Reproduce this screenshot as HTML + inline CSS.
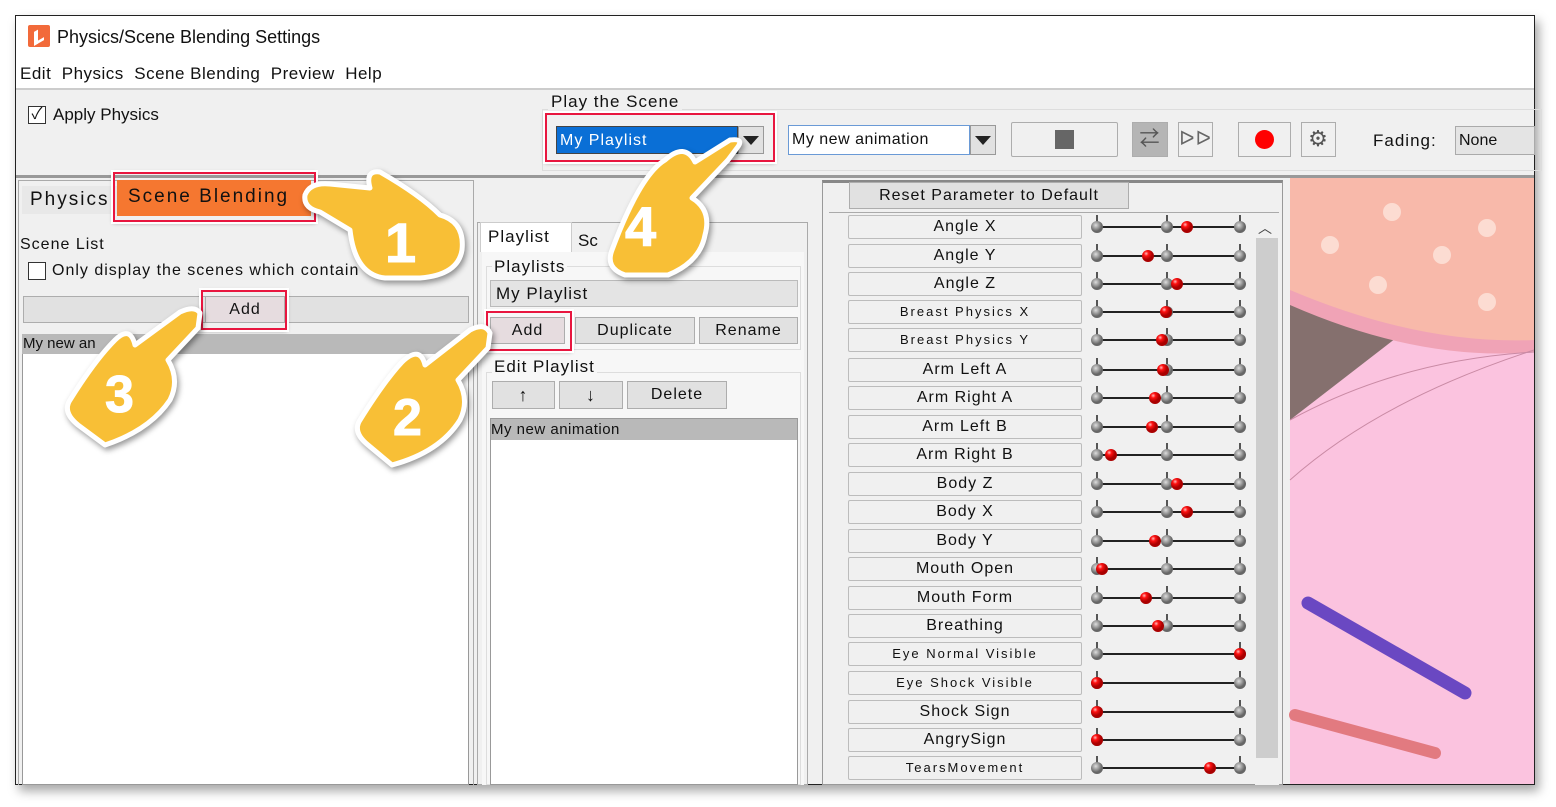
<!DOCTYPE html>
<html><head><meta charset="utf-8"><style>
*{box-sizing:border-box;margin:0;padding:0}
body{width:1556px;height:807px;background:#fff;position:relative;overflow:hidden;font-family:"Liberation Sans","Noto Sans CJK JP",sans-serif;font-size:16px;color:#111}
.a{position:absolute}
.win{left:15px;top:15px;width:1520px;height:770px;border:1px solid #222;background:#f0f0f0;box-shadow:4px 6px 10px rgba(0,0,0,.35)}
.btn{position:absolute;background:#e1e1e1;border:1px solid #adadad;text-align:center;letter-spacing:1px}
.red{position:absolute;border:2px solid #e8163f;box-shadow:0 0 0 2px #fff,0 1px 4px rgba(0,0,0,.4)}
.lbl{position:absolute;left:848px;width:234px;height:24px;background:#f0f0f0;border:1px solid #bcbcbc;border-radius:2px;text-align:center;font-size:16px;line-height:22px;letter-spacing:1px}
.sm{font-size:13px;letter-spacing:2px}
</style></head><body>
<div class="a win"></div>
<div class="a" style="left:16px;top:16px;width:1518px;height:44px;background:#fff"></div>
<div class="a" style="left:28px;top:25px;width:22px;height:22px;background:#f26a3a;border-radius:2px"></div>
<div class="a" style="left:34px;top:29px;width:10px;height:14px;border-left:4px solid #fff;border-bottom:3px solid #fff;transform:skewY(-30deg)"></div>
<div class="a" style="left:57px;top:27px;font-size:18px">Physics/Scene Blending Settings</div>
<div class="a" style="left:16px;top:60px;width:1518px;height:30px;background:#fff;border-bottom:2px solid #ccc"></div>
<div class="a" style="left:20px;top:64px;font-size:17px;letter-spacing:.5px">Edit&nbsp; Physics&nbsp; Scene Blending&nbsp; Preview&nbsp; Help</div>
<div class="a" style="left:28px;top:106px;width:18px;height:18px;border:1px solid #333;background:#fff;font-size:16px;line-height:15px;text-align:center">✓</div>
<div class="a" style="left:53px;top:105px;font-size:17px">Apply Physics</div>
<div class="a" style="left:542px;top:109px;width:1000px;height:62px;border:1px solid #ddd"></div>
<div class="a" style="left:548px;top:92px;background:#f0f0f0;padding:0 3px;font-size:17px;letter-spacing:1px">Play the Scene</div>
<div class="a" style="left:556px;top:126px;width:182px;height:28px;background:#0a6fd6;color:#fff;padding-left:3px;line-height:27px;font-size:16px;letter-spacing:1px;border:1px solid #444">My Playlist</div>
<div class="a" style="left:738px;top:126px;width:26px;height:28px;background:#e1e1e1;border:1px solid #999"></div>
<div class="a" style="left:743px;top:136px;border-left:8px solid transparent;border-right:8px solid transparent;border-top:9px solid #222"></div>
<div class="red" style="left:545px;top:113px;width:230px;height:49px"></div>
<div class="a" style="left:788px;top:125px;width:182px;height:30px;background:#fff;border:1px solid #6a9ad6;padding-left:3px;line-height:28px;letter-spacing:.5px">My new animation</div>
<div class="a" style="left:970px;top:125px;width:26px;height:30px;background:#e1e1e1;border:1px solid #999"></div>
<div class="a" style="left:975px;top:136px;border-left:8px solid transparent;border-right:8px solid transparent;border-top:9px solid #222"></div>
<div class="btn" style="left:1011px;top:122px;width:107px;height:35px;background:#f0f0f0;border-radius:2px"></div>
<div class="a" style="left:1055px;top:130px;width:19px;height:19px;background:#666"></div>
<div class="btn" style="left:1132px;top:122px;width:36px;height:35px;background:#b5b5b5;color:#555;font-size:20px;line-height:32px">⇄</div>
<div class="btn" style="left:1178px;top:122px;width:35px;height:35px;background:#f0f0f0;color:#666;font-size:20px;line-height:32px">ᐅᐅ</div>
<div class="btn" style="left:1238px;top:122px;width:53px;height:35px;background:#f0f0f0"></div>
<div class="a" style="left:1255px;top:130px;width:19px;height:19px;background:#f00;border-radius:50%"></div>
<div class="btn" style="left:1301px;top:122px;width:35px;height:35px;background:#f0f0f0;color:#555;font-size:22px;line-height:31px">⚙</div>
<div class="a" style="left:1373px;top:131px;font-size:17px;letter-spacing:1px">Fading:</div>
<div class="a" style="left:1455px;top:126px;width:80px;height:29px;background:#e4e4e4;border:1px solid #aaa;padding-left:3px;line-height:27px">None</div>
<div class="a" style="left:16px;top:175px;width:1518px;height:3px;background:#999"></div>
<div class="a" style="left:18px;top:180px;width:456px;height:605px;border:1px solid #aaa;border-bottom:none"></div>
<div class="a" style="left:22px;top:186px;width:95px;height:28px;background:#e8e8e8;font-size:19px;letter-spacing:2px;line-height:28px;padding-left:8px">Physics</div>
<div class="a" style="left:117px;top:180px;width:194px;height:36px;background:#f57730;font-size:19px;letter-spacing:2px;line-height:34px;padding-left:11px">Scene Blending</div>
<div class="red" style="left:113px;top:172px;width:203px;height:50px"></div>
<div class="a" style="left:20px;top:236px;font-size:16px;letter-spacing:1px">Scene List</div>
<div class="a" style="left:28px;top:262px;width:18px;height:18px;border:1px solid #333;background:#fff"></div>
<div class="a" style="left:52px;top:262px;font-size:16px;letter-spacing:1px">Only display the scenes which contain</div>
<div class="btn" style="left:23px;top:296px;width:446px;height:27px"></div>
<div class="btn" style="left:205px;top:296px;width:80px;height:27px;background:#e6dcdf;line-height:25px">Add</div>
<div class="red" style="left:201px;top:290px;width:86px;height:40px"></div>
<div class="a" style="left:22px;top:334px;width:447px;height:451px;background:#fff;border:1px solid #999"></div>
<div class="a" style="left:22px;top:334px;width:447px;height:20px;background:#b9b9b9;padding-left:1px;line-height:20px;font-size:15px">My new an</div>
<div class="a" style="left:477px;top:222px;width:331px;height:563px;border:1px solid #aaa"></div>
<div class="a" style="left:480px;top:222px;width:92px;height:30px;background:#fff;border:1px solid #ccc;border-bottom:none;font-size:17px;letter-spacing:1px;line-height:28px;padding-left:7px">Playlist</div>
<div class="a" style="left:578px;top:231px;font-size:17px">Sc</div>
<div class="a" style="left:482px;top:252px;width:322px;height:533px;background:#f7f7f7"></div>
<div class="a" style="left:486px;top:266px;width:315px;height:84px;border:1px solid #ddd"></div>
<div class="a" style="left:492px;top:257px;background:#f7f7f7;padding:0 2px;font-size:17px;letter-spacing:1px">Playlists</div>
<div class="a" style="left:490px;top:280px;width:308px;height:27px;background:#e4e4e4;border:1px solid #bbb;padding-left:5px;line-height:25px;font-size:17px;letter-spacing:1px">My Playlist</div>
<div class="btn" style="left:490px;top:317px;width:75px;height:27px;background:#e6dcdf;line-height:25px">Add</div>
<div class="btn" style="left:575px;top:317px;width:120px;height:27px;line-height:25px">Duplicate</div>
<div class="btn" style="left:699px;top:317px;width:99px;height:27px;line-height:25px">Rename</div>
<div class="red" style="left:486px;top:311px;width:86px;height:40px"></div>
<div class="a" style="left:486px;top:372px;width:315px;height:413px;border:1px solid #ddd"></div>
<div class="a" style="left:492px;top:357px;background:#f7f7f7;padding:0 2px;font-size:17px;letter-spacing:1px">Edit Playlist</div>
<div class="btn" style="left:492px;top:381px;width:63px;height:28px;line-height:26px;font-size:18px">↑</div>
<div class="btn" style="left:559px;top:381px;width:64px;height:28px;line-height:26px;font-size:18px">↓</div>
<div class="btn" style="left:627px;top:381px;width:100px;height:28px;line-height:26px">Delete</div>
<div class="a" style="left:490px;top:418px;width:308px;height:367px;background:#fff;border:1px solid #999"></div>
<div class="a" style="left:491px;top:419px;width:306px;height:21px;background:#b9b9b9;line-height:21px;font-size:15px;letter-spacing:.5px">My new animation</div>
<div class="a" style="left:822px;top:180px;width:461px;height:605px;border:1px solid #999;border-top:3px solid #888"></div>
<div class="btn" style="left:849px;top:182px;width:280px;height:27px;line-height:25px;font-size:16px">Reset Parameter to Default</div>
<div class="a" style="left:829px;top:212px;width:450px;height:1px;background:#aaa"></div>
<div class="a" style="left:1255px;top:215px;width:24px;height:570px;background:#f0f0f0"></div>
<div class="a" style="left:1258px;top:218px;font-size:14px;color:#444">︿</div>
<div class="a" style="left:1256px;top:238px;width:22px;height:520px;background:#cdcdcd"></div>
<div class="lbl" style="top:215px">Angle X</div>
<div class="lbl" style="top:244px">Angle Y</div>
<div class="lbl" style="top:272px">Angle Z</div>
<div class="lbl sm" style="top:300px">Breast Physics X</div>
<div class="lbl sm" style="top:328px">Breast Physics Y</div>
<div class="lbl" style="top:358px">Arm Left A</div>
<div class="lbl" style="top:386px">Arm Right A</div>
<div class="lbl" style="top:415px">Arm Left B</div>
<div class="lbl" style="top:443px">Arm Right B</div>
<div class="lbl" style="top:472px">Body Z</div>
<div class="lbl" style="top:500px">Body X</div>
<div class="lbl" style="top:529px">Body Y</div>
<div class="lbl" style="top:557px">Mouth Open</div>
<div class="lbl" style="top:586px">Mouth Form</div>
<div class="lbl" style="top:614px">Breathing</div>
<div class="lbl sm" style="top:642px">Eye Normal Visible</div>
<div class="lbl sm" style="top:671px">Eye Shock Visible</div>
<div class="lbl" style="top:700px">Shock Sign</div>
<div class="lbl" style="top:728px">AngrySign</div>
<div class="lbl sm" style="top:756px">TearsMovement</div>
<svg class="a" style="left:0;top:0" width="1556" height="807">
<defs><radialGradient id="g" cx=".4" cy=".35"><stop offset="0" stop-color="#ddd"/><stop offset="1" stop-color="#666"/></radialGradient>
<radialGradient id="r" cx=".35" cy=".3"><stop offset="0" stop-color="#fbb"/><stop offset=".4" stop-color="#f11"/><stop offset="1" stop-color="#a00"/></radialGradient>
<g id="s3"><line x1="1097" x2="1240" stroke="#222" stroke-width="2"/><line x1="1097" x2="1097" y1="-12" y2="0" stroke="#555" stroke-width="2"/><line x1="1167" x2="1167" y1="-12" y2="0" stroke="#555" stroke-width="2"/><line x1="1240" x2="1240" y1="-12" y2="0" stroke="#555" stroke-width="2"/><circle cx="1097" r="6" fill="url(#g)"/><circle cx="1167" r="6" fill="url(#g)"/><circle cx="1240" r="6" fill="url(#g)"/></g>
<g id="s2"><line x1="1097" x2="1240" stroke="#222" stroke-width="2"/><line x1="1097" x2="1097" y1="-12" y2="0" stroke="#555" stroke-width="2"/><line x1="1240" x2="1240" y1="-12" y2="0" stroke="#555" stroke-width="2"/><circle cx="1097" r="6" fill="url(#g)"/><circle cx="1240" r="6" fill="url(#g)"/></g>
</defs>
<g fill="url(#r)">
<use href="#s3" y="227"/><circle cx="1187" cy="227" r="6"/>
<use href="#s3" y="256"/><circle cx="1148" cy="256" r="6"/>
<use href="#s3" y="284"/><circle cx="1177" cy="284" r="6"/>
<use href="#s3" y="312"/><circle cx="1166" cy="312" r="6"/>
<use href="#s3" y="340"/><circle cx="1162" cy="340" r="6"/>
<use href="#s3" y="370"/><circle cx="1163" cy="370" r="6"/>
<use href="#s3" y="398"/><circle cx="1155" cy="398" r="6"/>
<use href="#s3" y="427"/><circle cx="1152" cy="427" r="6"/>
<use href="#s3" y="455"/><circle cx="1111" cy="455" r="6"/>
<use href="#s3" y="484"/><circle cx="1177" cy="484" r="6"/>
<use href="#s3" y="512"/><circle cx="1187" cy="512" r="6"/>
<use href="#s3" y="541"/><circle cx="1155" cy="541" r="6"/>
<use href="#s3" y="569"/><circle cx="1102" cy="569" r="6"/>
<use href="#s3" y="598"/><circle cx="1146" cy="598" r="6"/>
<use href="#s3" y="626"/><circle cx="1158" cy="626" r="6"/>
<use href="#s2" y="654"/><circle cx="1240" cy="654" r="6"/>
<use href="#s2" y="683"/><circle cx="1097" cy="683" r="6"/>
<use href="#s2" y="712"/><circle cx="1097" cy="712" r="6"/>
<use href="#s2" y="740"/><circle cx="1097" cy="740" r="6"/>
<use href="#s2" y="768"/><circle cx="1210" cy="768" r="6"/>
</g>
<rect x="1290" y="178" width="244" height="606" fill="#fbc3df"/>
<path d="M1290 300L1400 335L1290 420Z" fill="#85706e"/>
<path d="M1290 178H1534V345Q1440 350 1300 300L1290 290Z" fill="#f8b9aa"/>
<path d="M1290 290Q1420 345 1534 340V352Q1420 362 1290 305Z" fill="#f0a3b6"/>
<g fill="#fcdcd2"><circle cx="1392" cy="212" r="9"/><circle cx="1330" cy="245" r="9"/><circle cx="1442" cy="255" r="9"/><circle cx="1378" cy="285" r="9"/><circle cx="1487" cy="228" r="9"/><circle cx="1487" cy="302" r="9"/></g>
<path d="M1290 420Q1400 360 1534 352" stroke="#c98aa4" fill="none"/>
<path d="M1290 480Q1380 400 1534 350" stroke="#c98aa4" fill="none"/>
<line x1="1308" y1="603" x2="1465" y2="693" stroke="#6a48c2" stroke-width="13" stroke-linecap="round"/>
<line x1="1295" y1="715" x2="1435" y2="753" stroke="#e27a80" stroke-width="12" stroke-linecap="round"/>
<g fill="#f8bf36" stroke="#fff" stroke-width="5" stroke-linejoin="round" style="filter:drop-shadow(2px 3px 3px rgba(0,0,0,.4))">
<path d="M305 195Q310 182 330 184L370 188Q365 170 380 172Q420 195 440 215Q465 222 462 250Q458 275 420 278H385Q355 275 350 230L320 212Q303 208 305 195Z"/>
<path d="M737 148Q745 138 730 140L695 162Q685 142 665 160Q640 175 612 250Q605 268 625 275H668Q700 262 705 235Q712 210 692 198L728 160Z"/>
<path d="M200 313Q195 305 180 312L135 345Q130 325 115 340Q95 360 70 400Q62 412 78 425L105 445Q150 430 170 400Q180 380 168 360L198 328Z"/>
<path d="M490 333Q485 322 470 330L425 365Q420 345 402 362Q385 380 360 420Q352 432 368 445L392 465Q440 452 460 420Q470 400 458 380L488 348Z"/>
</g>
<g fill="#fff" font-family="Liberation Sans" font-weight="bold" stroke="#fff" stroke-width="1">
<text x="385" y="262" font-size="56">1</text>
<text x="625" y="246" font-size="56">4</text>
<text x="105" y="412" font-size="52">3</text>
<text x="393" y="435" font-size="52">2</text>
</g>
</svg>
</body></html>
